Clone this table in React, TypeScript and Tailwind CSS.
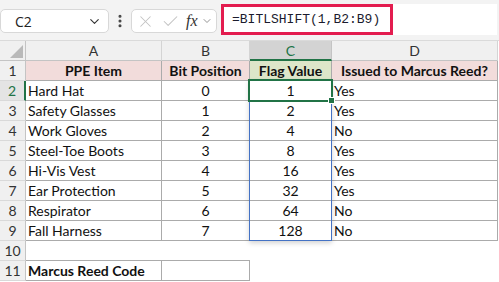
import { ChevronDown, Check, X, EllipsisVertical } from 'lucide-react';

const items: [string, number, number, string][] = [
  ['Hard Hat', 0, 1, 'Yes'],
  ['Safety Glasses', 1, 2, 'Yes'],
  ['Work Gloves', 2, 4, 'No'],
  ['Steel-Toe Boots', 3, 8, 'Yes'],
  ['Hi-Vis Vest', 4, 16, 'Yes'],
  ['Ear Protection', 5, 32, 'Yes'],
  ['Respirator', 6, 64, 'No'],
  ['Fall Harness', 7, 128, 'No'],
];

const cell = 'h-[20px] border-r border-b border-[#ababab] flex items-center text-[14px] text-[#111] leading-none';
const rowHead =
  'w-[26px] h-[20px] shrink-0 flex items-center justify-center border-r border-b border-r-[#c4c4c4] border-b-[#d9d9d9] bg-[#f0f0f0] text-[14px] text-[#333]';

function FormulaBar() {
  return (
    <div className="h-[41px] bg-[#f3f3f3] flex items-start border-b border-[#dadada]">
      <div className="mt-[9px] w-[109px] h-[24px] rounded-[5px] border border-[#d8d8d8] bg-white flex items-center justify-between pl-[14px] pr-[6px]">
        <span className="text-[14px] text-[#222] font-['Open_Sans',sans-serif]">C2</span>
        <ChevronDown size={15} strokeWidth={1.8} className="text-[#333]" />
      </div>
      <div className="mt-[9px] w-[22px] h-[24px] flex items-center justify-center">
        <EllipsisVertical size={16} strokeWidth={2.6} className="text-[#444]" />
      </div>
      <div className="mt-[9px] w-[86px] h-[24px] rounded-[5px] border border-[#d8d8d8] bg-white flex items-center pl-[4px]">
        <X size={19} strokeWidth={1.3} className="text-[#c2c2c2]" />
        <Check size={19} strokeWidth={1.3} className="ml-[6px] text-[#c2c2c2]" />
        <span className="ml-[6px] text-[16px] italic text-[#333] font-['Liberation_Serif',serif]">fx</span>
        <ChevronDown size={12} strokeWidth={1.8} className="ml-[3px] text-[#888]" />
      </div>
      <div className="mt-[4px] ml-[4px] w-[276px] h-[31px] bg-white flex">
        <div className="w-[172px] h-[31px] border-[3px] border-[#e31c4f] flex items-center pl-[8px]">
          <span className="text-[13px] text-[#1b1b2e] font-['Liberation_Mono',monospace]">=BITLSHIFT(1,B2:B9)</span>
        </div>
      </div>
    </div>
  );
}

function ColumnHeaders() {
  const cols = [
    { l: 'A', w: 'w-[136px]' },
    { l: 'B', w: 'w-[88px]' },
    { l: 'C', w: 'w-[82px]', sel: true },
    { l: 'D', w: 'w-[166px]' },
  ];
  return (
    <div className="flex h-[20px]">
      <div className="w-[26px] h-[20px] bg-[#f0f0f0] border-r border-b border-r-[#c4c4c4] border-b-[#c4c4c4] flex items-end justify-end pr-[2px] pb-[2px]">
        <svg width="13" height="13" viewBox="0 0 13 13">
          <polygon points="13,0 13,13 0,13" fill="#b9b9b9" />
        </svg>
      </div>
      {cols.map((c) => (
        <div
          key={c.l}
          className={
            c.sel
              ? `${c.w} h-[20px] bg-[#d3d3d3] border-r border-r-[#c4c4c4] border-b-2 border-b-[#217346] flex items-center justify-center text-[14px] text-[#217346]`
              : `${c.w} h-[20px] bg-[#f0f0f0] border-r border-b border-r-[#d4d4d4] border-b-[#c4c4c4] flex items-center justify-center text-[14px] text-[#333]`
          }
        >
          {c.l}
        </div>
      ))}
    </div>
  );
}

export default function App() {
  return (
    <div className="w-[499px] h-[282px] bg-white overflow-hidden font-['Lato',sans-serif]">
      <FormulaBar />
      <div className="relative">
        <ColumnHeaders />

        <div className="flex">
          <div className={rowHead}>1</div>
          <div className={`${cell} w-[136px] justify-center bg-[#f2dcdb] font-bold`}>PPE Item</div>
          <div className={`${cell} w-[88px] justify-center bg-[#f2dcdb] font-bold`}>Bit Position</div>
          <div className={`${cell} w-[82px] justify-center bg-[#dde6c9] font-bold`}>Flag Value</div>
          <div className={`${cell} w-[166px] justify-center bg-[#f2dcdb] font-bold`}>Issued to Marcus Reed?</div>
        </div>

        {items.map(([name, bit, flag, issued], i) => (
          <div key={name} className="flex">
            <div
              className={
                i === 0
                  ? 'w-[26px] h-[20px] shrink-0 flex items-center justify-center border-r-2 border-b border-r-[#217346] border-b-[#d9d9d9] bg-[#e4e4e4] text-[14px] text-[#217346]'
                  : rowHead
              }
            >
              {i + 2}
            </div>
            <div className={`${cell} w-[136px] pl-[2px]`}>{name}</div>
            <div className={`${cell} w-[88px] justify-center`}>{bit}</div>
            <div className={`${cell} w-[82px] justify-center`}>{flag}</div>
            <div className={`${cell} w-[166px] pl-[2px]`}>{issued}</div>
          </div>
        ))}

        <div className="flex">
          <div className={rowHead}>10</div>
          <div className="w-[136px] h-[20px] border-b border-[#ababab]" />
          <div className="w-[88px] h-[20px] border-b border-[#ababab]" />
        </div>

        <div className="flex">
          <div className={rowHead}>11</div>
          <div className={`${cell} w-[136px] pl-[2px] font-bold`}>Marcus Reed Code</div>
          <div className={`${cell} w-[88px]`} />
        </div>

        {/* spill range outline C2:C9 */}
        <div className="absolute left-[249px] top-[39px] w-[83px] h-[161px] border border-[#4472c4] shadow-[0_2px_5px_rgba(0,0,0,0.18)] pointer-events-none" />
        {/* active cell C2 */}
        <div className="absolute left-[248px] top-[38px] w-[85px] h-[23px] border-2 border-[#217346] pointer-events-none" />
        <div className="absolute left-[328px] top-[56px] w-[7px] h-[7px] bg-[#217346] border border-white" />
      </div>
    </div>
  );
}
